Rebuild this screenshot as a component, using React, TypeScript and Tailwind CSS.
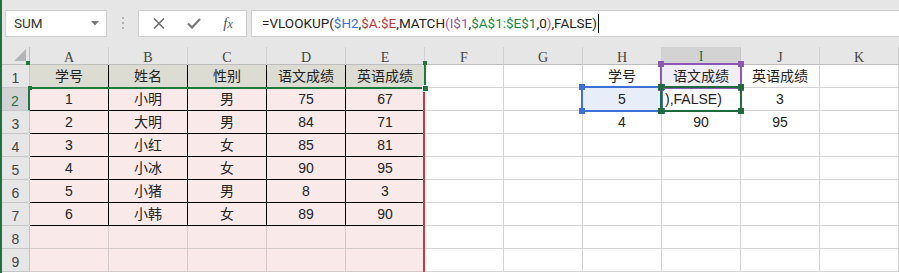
import React from "react";

const COLS = ["A", "B", "C", "D", "E", "F", "G", "H", "I", "J", "K"];

const rows: string[][] = [
  ["学号", "姓名", "性别", "语文成绩", "英语成绩", "", "", "学号", "语文成绩", "英语成绩", ""],
  ["1", "小明", "男", "75", "67", "", "", "5", "),FALSE)", "3", ""],
  ["2", "大明", "男", "84", "71", "", "", "4", "90", "95", ""],
  ["3", "小红", "女", "85", "81", "", "", "", "", "", ""],
  ["4", "小冰", "女", "90", "95", "", "", "", "", "", ""],
  ["5", "小猪", "男", "8", "3", "", "", "", "", "", ""],
  ["6", "小韩", "女", "89", "90", "", "", "", "", "", ""],
  ["", "", "", "", "", "", "", "", "", "", ""],
  ["", "", "", "", "", "", "", "", "", "", ""],
];

// background + border colour for a data cell
function cellTone(r: number, c: number) {
  if (c < 5 && r === 1) return "bg-[#dddcd3] border-black";
  if (c < 5 && r <= 7) return "bg-[#f9e9e9] border-black";
  if (c < 5) return "bg-[#f9e9e9] border-[#d5caca]";
  if (c === 7 && r === 2) return "bg-[#e7eefa] border-[#d4d4d4]";
  if (c === 8 && r === 1) return "bg-[#f1edf7] border-[#d4d4d4]";
  return "bg-white border-[#d4d4d4]";
}

function Handles({ color }: { color: string }) {
  // small squares sitting on the four corners of a reference box
  return (
    <>
      <span className={`absolute -left-[4px] -top-[4px] h-[6px] w-[6px] ${color}`} />
      <span className={`absolute -right-[4px] -top-[4px] h-[6px] w-[6px] ${color}`} />
      <span className={`absolute -left-[4px] -bottom-[4px] h-[6px] w-[6px] ${color}`} />
      <span className={`absolute -right-[4px] -bottom-[4px] h-[6px] w-[6px] ${color}`} />
    </>
  );
}

function FormulaBar() {
  return (
    <div className="flex h-[47px] items-start bg-[#e6e6e6] pt-[10px] font-['Roboto','Liberation_Sans',sans-serif]">
      <div className="ml-[3px] flex h-[27px] w-[102px] items-center justify-between border border-[#cfcfcf] bg-white pl-[8px] pr-[7px] text-[13.5px] text-[#333]">
        <span>SUM</span>
        <svg width="8" height="5" viewBox="0 0 8 5">
          <path d="M0 0h8L4 4.5z" fill="#7a7a7a" />
        </svg>
      </div>
      <div className="flex w-[31px] flex-col items-center gap-[3px] pt-[7px]">
        <span className="h-[2px] w-[2px] bg-[#b3b3b3]" />
        <span className="h-[2px] w-[2px] bg-[#b3b3b3]" />
        <span className="h-[2px] w-[2px] bg-[#b3b3b3]" />
      </div>
      <div className="flex h-[27px] w-[109px] items-center border border-[#cfcfcf] bg-white">
        <div className="flex w-[38px] justify-center pl-[2px]">
          <svg width="12" height="11" viewBox="0 0 12 11">
            <path d="M1 .5l10 10M11 .5l-10 10" stroke="#6e6e6e" strokeWidth="1.6" />
          </svg>
        </div>
        <div className="flex w-[34px] justify-center">
          <svg width="14" height="11" viewBox="0 0 14 11">
            <path d="M1 5.5l4 4 8-8.5" stroke="#7c7c7c" strokeWidth="2.3" fill="none" />
          </svg>
        </div>
        <div className="flex w-[34px] justify-center font-['Liberation_Serif',serif] text-[15px] italic text-[#555]">
          <span>f<span className="text-[12px]">x</span></span>
        </div>
      </div>
      <div className="ml-[4px] flex h-[27px] flex-1 items-center border border-r-0 border-[#cfcfcf] bg-white pl-[10px] text-[13.5px] text-[#222]">
        <span>=VLOOKUP(</span>
        <span className="text-[#3d6fd6]">$H2</span>
        <span>,</span>
        <span className="text-[#c9343c]">$A:$E</span>
        <span>,MATCH</span>
        <span className="text-[#c2489a]">(</span>
        <span className="text-[#8b58b8]">I$1</span>
        <span>,</span>
        <span className="text-[#168a3f]">$A$1:$E$1</span>
        <span>,0</span>
        <span className="text-[#c2489a]">)</span>
        <span>,FALSE)</span>
        <span className="ml-[1px] h-[19px] w-[1px] bg-black" />
      </div>
    </div>
  );
}

function Sheet() {
  return (
    <div className="relative">
      <div className="grid grid-cols-[28px_repeat(11,79px)] grid-rows-[18px_repeat(9,23px)]">
        {/* corner */}
        <div className="relative border-b border-r border-[#bdbdbd] bg-[#e6e6e6]">
          <svg className="absolute bottom-[3px] right-[3px]" width="12" height="12" viewBox="0 0 12 12">
            <path d="M12 0v12H0z" fill="#b5b5b5" />
          </svg>
        </div>
        {COLS.map((col) =>
          col === "I" ? (
            <div
              key={col}
              className="flex items-center justify-center border-b-2 border-r border-b-[#217346] border-r-[#c6c6c6] bg-[#d3d3d3] pt-[3px] font-['Liberation_Serif',serif] text-[14px] text-[#217346]"
            >
              {col}
            </div>
          ) : (
            <div
              key={col}
              className="flex items-center justify-center border-b border-r border-b-[#bdbdbd] border-r-[#d0d0d0] bg-[#e6e6e6] pt-[3px] font-['Liberation_Serif',serif] text-[14px] text-[#444]"
            >
              {col}
            </div>
          )
        )}
        {rows.map((row, ri) => {
          const r = ri + 1;
          return (
            <React.Fragment key={r}>
              {r === 2 ? (
                <div className="flex items-end justify-center border-b border-r-2 border-b-[#c6c6c6] border-r-[#217346] bg-[#d3d3d3] pb-[1px] font-['Liberation_Sans',sans-serif] text-[14px] leading-4 text-[#217346]">
                  {r}
                </div>
              ) : (
                <div className="flex items-end justify-center border-b border-r border-[#c6c6c6] bg-[#e6e6e6] pb-[1px] font-['Liberation_Sans',sans-serif] text-[14px] leading-4 text-[#444]">
                  {r}
                </div>
              )}
              {row.map((v, c) => (
                <div
                  key={c}
                  className={`flex items-center overflow-visible whitespace-nowrap border-b border-r font-['Liberation_Sans','Noto_Sans_CJK_SC',sans-serif] text-[14px] text-[#222] ${cellTone(r, c)} ${
                    c === 8 && r === 2 ? "justify-start pl-[3px]" : "justify-center"
                  }`}
                >
                  {v}
                </div>
              ))}
            </React.Fragment>
          );
        })}
      </div>

      {/* $A:$E  red column range */}
      <div className="absolute left-[421px] top-[41px] bottom-0 w-[2px] bg-[#d0363e]" />

      {/* $A$1:$E$1 green range */}
      <div className="absolute left-[27px] top-[17px] h-[25px] w-[397px] border-b-2 border-r-2 border-[#1d7a3a]">
        <span className="absolute -left-[3px] -top-[3px] h-[4px] w-[4px] bg-[#1d7a3a]" />
        <span className="absolute -right-[3px] -top-[3px] h-[4px] w-[4px] bg-[#1d7a3a]" />
        <span className="absolute -left-[1px] -bottom-[3px] h-[4px] w-[4px] bg-[#1d7a3a]" />
        <span className="absolute -right-[5px] -bottom-[5px] h-[7px] w-[7px] border border-white bg-[#1d7a3a]" />
      </div>

      {/* $H2 blue */}
      <div className="absolute left-[579px] top-[39px] h-[26px] w-[82px] border-2 border-[#3d6fd6]">
        <Handles color="bg-[#3d6fd6]" />
      </div>

      {/* I$1 purple */}
      <div className="absolute left-[658px] top-[16px] h-[26px] w-[82px] border-2 border-[#8b58b8]">
        <Handles color="bg-[#8b58b8]" />
      </div>

      {/* active cell I2 being edited */}
      <div className="absolute left-[658px] top-[39px] h-[26px] w-[82px] border-2 border-[#1f6b3c]">
        <Handles color="bg-[#1f6b3c]" />
      </div>
    </div>
  );
}

export default function App() {
  return (
    <div className="h-[273px] w-[899px] overflow-hidden border-l-2 border-[#217346] bg-white">
      <FormulaBar />
      <Sheet />
    </div>
  );
}
